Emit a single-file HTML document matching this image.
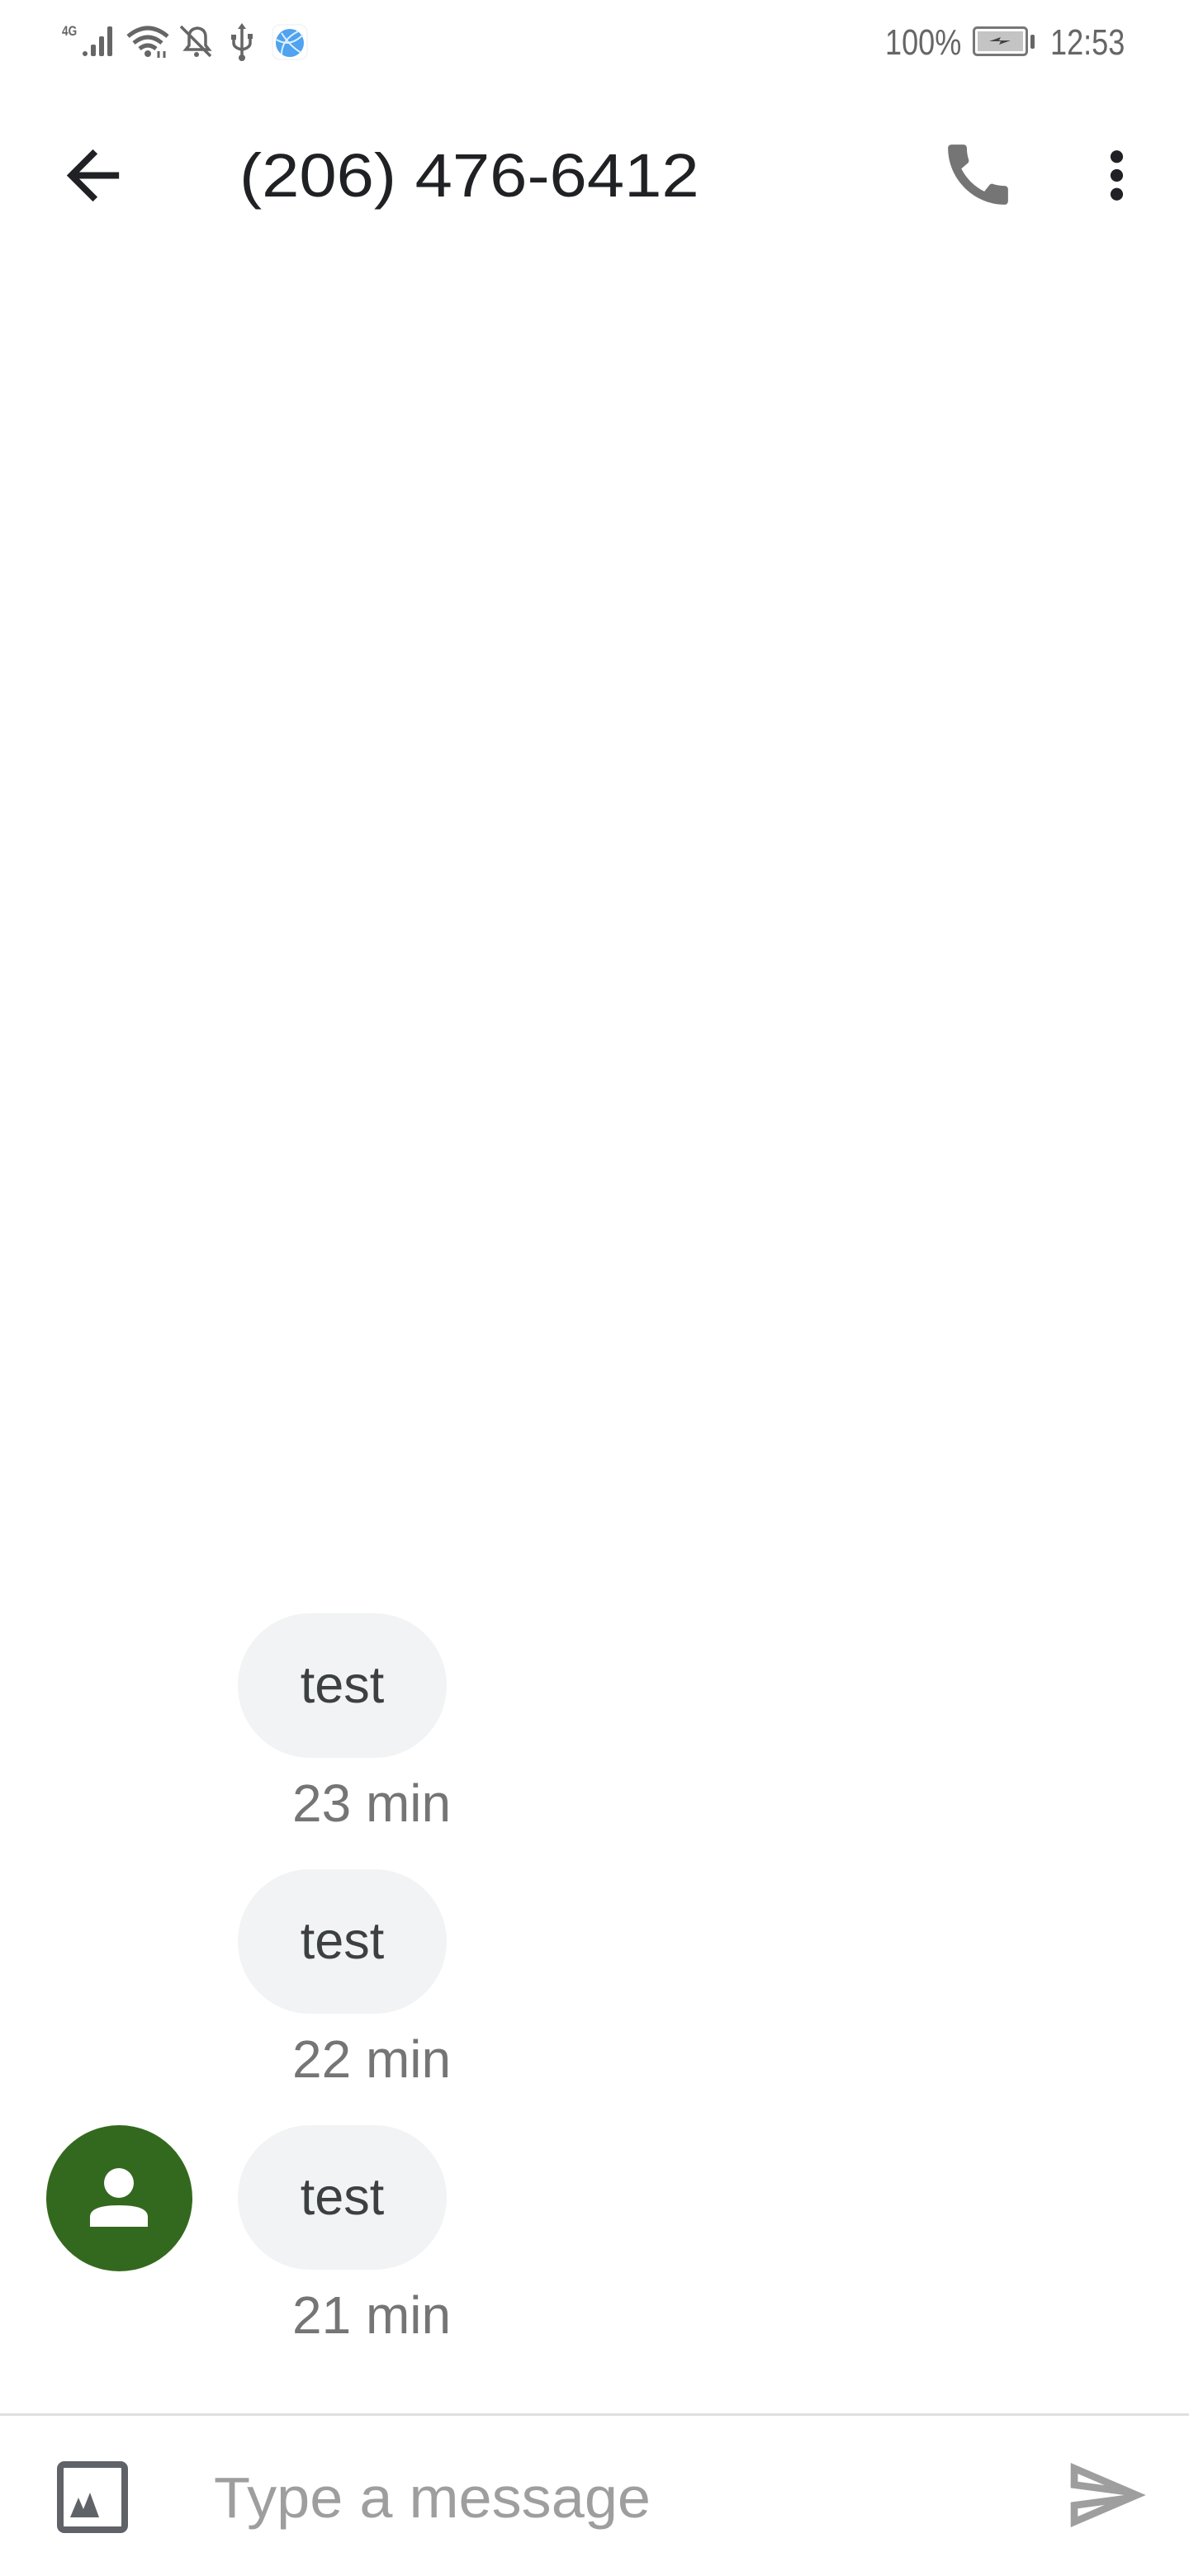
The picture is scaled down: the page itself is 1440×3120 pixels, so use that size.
<!DOCTYPE html>
<html><head><meta charset="utf-8">
<style>
html,body{margin:0;padding:0;background:#fff;}
body{width:1440px;height:3120px;position:relative;overflow:hidden;font-family:"Liberation Sans",sans-serif;}
.abs{position:absolute;}
.sb{font-size:44px;color:#666;line-height:44px;transform-origin:left top;transform:scaleX(.82);white-space:nowrap;}
.title{left:290px;top:168px;font-size:74px;color:#202124;line-height:90px;white-space:nowrap;transform-origin:left top;transform:scaleX(1.1);}
.bubble{left:288px;width:253px;height:175px;border-radius:88px;background:#f1f3f4;color:#3c4043;font-size:63px;line-height:175px;text-align:center;}
.time{left:354px;font-size:64px;color:#757575;line-height:70px;white-space:nowrap;}
</style></head><body>

<!-- status bar -->
<div class="abs" style="left:75px;top:28px;font-size:17px;font-weight:bold;color:#666;transform:scaleX(.8);transform-origin:left top;">4G</div>
<svg class="abs" style="left:95px;top:26px" width="280" height="48" viewBox="0 0 280 48">
  <g fill="#666">
    <rect x="5" y="36" width="6" height="6" rx="3"/>
    <rect x="15" y="28" width="6" height="14" rx="2"/>
    <rect x="25" y="18" width="6" height="24" rx="2"/>
    <rect x="35" y="6" width="6" height="36" rx="2"/>
  </g>
  <g fill="none" stroke="#666" stroke-width="5">
    <path d="M60 18 Q84 -2 108 18"/>
    <path d="M67 26 Q84 12 101 26"/>
    <path d="M74 33 Q84 25 94 33"/>
  </g>
  <circle cx="84" cy="39" r="4" fill="#666"/>
  <path d="M97 36 v8 M104 36 v8" stroke="#666" stroke-width="3"/>
  <g fill="none" stroke="#666" stroke-width="3.5">
    <path d="M130 34 h28 l-4 -5 v-10 q0 -10 -10 -11 q-10 1 -10 11 v10 z"/>
    <path d="M124 6 L160 42"/>
  </g>
  <circle cx="143" cy="40" r="3" fill="#666"/>
  <g stroke="#666" stroke-width="3.5" fill="none">
    <path d="M198 6 v38 M188 18 v8 q0 6 10 8 q10 -2 10 -8 v-6"/>
  </g>
  <path d="M198 2 l-5 7 h10 z" fill="#666"/>
  <circle cx="198" cy="44" r="4" fill="#666"/>
  <rect x="185" y="16" width="6" height="6" fill="#666"/>
  <rect x="205" y="15" width="6" height="6" fill="#666"/>
  <rect x="235" y="4" width="42" height="42" rx="9" fill="#fff" stroke="#eee"/>
  <circle cx="256" cy="26" r="17" fill="#4fa3ef"/>
  <path d="M240 22 q16 10 32 -6 M246 40 q0 -18 20 -28 M246 14 q10 16 24 24" stroke="#dff0ff" stroke-width="2" fill="none"/>
</svg>
<div class="abs sb" style="left:1072px;top:30px;">100%</div>
<svg class="abs" style="left:1178px;top:32px" width="80" height="38" viewBox="0 0 80 38">
  <rect x="1.5" y="1.5" width="64" height="33" rx="4" fill="#fff" stroke="#777" stroke-width="3"/>
  <rect x="6" y="6" width="55" height="24" fill="#c4c4c4"/>
  <path d="M20 18 l14 -5 l-2 4 l14 0 l-14 5 l2 -4 z" fill="#444"/>
  <rect x="70" y="10" width="5" height="17" rx="2" fill="#666"/>
</svg>
<div class="abs sb" style="left:1272px;top:30px;">12:53</div>

<!-- header -->
<svg class="abs" style="left:65px;top:165px" width="95" height="95" viewBox="0 0 24 24"><path fill="#202124" d="M20 11H7.83l5.59-5.59L12 4l-8 8 8 8 1.41-1.41L7.83 13H20v-2z"/></svg>
<div class="abs title">(206) 476-6412</div>
<svg class="abs" style="left:1136px;top:163px" width="97" height="97" viewBox="0 0 24 24"><path fill="#757575" d="M20.01 15.38c-1.23 0-2.420-.2-3.53-.56-.35-.12-.74-.03-1.01.24l-1.57 1.970c-2.83-1.35-5.48-3.9-6.89-6.83l1.95-1.66c.27-.28.35-.67.24-1.02-.37-1.110-.56-2.3-.56-3.53 0-.54-.45-.99-.99-.99H4.19C3.65 3 3 3.24 3 3.99 3 13.28 10.73 21 20.01 21c.71 0 .99-.63.99-1.18v-3.45c0-.54-.45-.99-.99-.99z"/></svg>
<svg class="abs" style="left:1307px;top:167px" width="91" height="91" viewBox="0 0 24 24"><path fill="#202124" d="M12 8c1.1 0 2-.9 2-2s-.9-2-2-2-2 .9-2 2 .9 2 2 2zm0 2c-1.1 0-2 .9-2 2s.9 2 2 2 2-.9 2-2-.9-2-2-2zm0 6c-1.1 0-2 .9-2 2s.9 2 2 2 2-.9 2-2-.9-2-2-2z"/></svg>

<!-- messages -->
<div class="abs bubble" style="top:1954px;">test</div>
<div class="abs time" style="top:2149px;">23 min</div>
<div class="abs bubble" style="top:2264px;">test</div>
<div class="abs time" style="top:2459px;">22 min</div>
<div class="abs bubble" style="top:2574px;">test</div>
<div class="abs time" style="top:2769px;">21 min</div>

<svg class="abs" style="left:56px;top:2574px" width="177" height="177" viewBox="0 0 177 177">
  <circle cx="88.5" cy="88.5" r="88.5" fill="#33691e"/>
  <circle cx="88" cy="70" r="18" fill="#fff"/>
  <path d="M53 123 v-12 q0 -14 35 -14 q35 0 35 14 v12 z" fill="#fff"/>
</svg>

<!-- compose -->
<div class="abs" style="left:0;top:2923px;width:1440px;height:3px;background:#e0e0e0;"></div>
<svg class="abs" style="left:68px;top:2980px" width="88" height="90" viewBox="0 0 88 90">
  <rect x="5" y="5" width="78" height="79" rx="5" fill="none" stroke="#5f6368" stroke-width="8"/>
  <path d="M17 69 l10 -24 l6 14 l8 -20 l11 30 z" fill="#5f6368"/>
</svg>
<div class="abs" style="left:259px;top:2985px;font-size:70px;color:#9e9e9e;line-height:80px;white-space:nowrap;transform-origin:left top;transform:scaleX(1.03);">Type a message</div>
<svg class="abs" style="left:1288px;top:2970px" width="104" height="104" viewBox="0 0 24 24"><path fill="#9e9e9e" d="M4.01 6.03l7.51 3.22-7.52-1 .01-2.22m7.5 8.72L4 17.970v-2.22l7.51-1M2.01 3L2 10l15 2-15 2 .01 7L23 12 2.01 3z"/></svg>

</body></html>
